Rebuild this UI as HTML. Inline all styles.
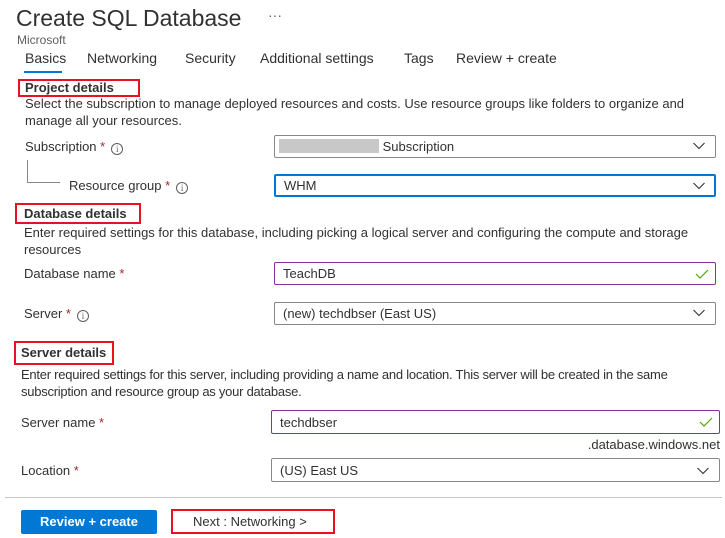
<!DOCTYPE html>
<html><head><meta charset="utf-8"><style>
*{margin:0;padding:0;box-sizing:border-box}
body{width:725px;height:538px;background:#fff;font-family:"Liberation Sans",sans-serif;color:#323130;position:relative;overflow:hidden}
.a{position:absolute;white-space:nowrap}
.t{font-size:13px;line-height:16px}
.red{border:2px solid #e81123}
.box{position:absolute;border:1px solid #8a8886;border-radius:2px;background:#fff;font-size:13px;line-height:22px;padding-left:8px}
.pur{border-color:#8a2da5}
.blue{border:2px solid #0078d4}
.st{color:#a4262c}
.info{display:inline-block;width:12px;height:12px;border:1px solid #605e5c;border-radius:50%;font-size:9px;line-height:10px;text-align:center;color:#605e5c;vertical-align:-1px;margin-left:6px;font-family:"Liberation Serif",serif}
.chev{position:absolute;right:10px;top:6px}
.chk{position:absolute;right:6px;top:5px}
</style></head><body>
<div class="a" style="left:16px;top:4px;font-size:23px;line-height:28px;color:#323130">Create SQL Database</div>
<div class="a" style="left:268px;top:7px;font-size:14px;color:#605e5c">···</div>
<div class="a" style="left:17px;top:33px;font-size:12px;color:#605e5c">Microsoft</div>
<div class="a" style="left:25px;top:50px;font-size:14px">Basics</div>
<div class="a" style="left:87px;top:50px;font-size:14px">Networking</div>
<div class="a" style="left:185px;top:50px;font-size:14px">Security</div>
<div class="a" style="left:260px;top:50px;font-size:14px">Additional settings</div>
<div class="a" style="left:404px;top:50px;font-size:14px">Tags</div>
<div class="a" style="left:456px;top:50px;font-size:14px">Review + create</div>
<div class="a" style="left:24px;top:71px;width:38px;height:2px;background:#0078d4"></div>

<div class="a red" style="left:18px;top:79px;width:122px;height:18px"></div>
<div class="a t" style="left:25px;top:80px;font-weight:bold;font-size:13px">Project details</div>
<div class="a t" style="left:25px;top:96px">Select the subscription to manage deployed resources and costs. Use resource groups like folders to organize and</div>
<div class="a t" style="left:25px;top:113px">manage all your resources.</div>

<div class="a t" style="left:25px;top:139px">Subscription <span class="st">*</span><span class="info">i</span></div>
<div class="box" style="left:274px;top:135px;width:442px;height:23px"><span style="display:inline-block;width:100px;height:14px;background:#c8c8c8;vertical-align:-2px;margin-left:-4px"></span> Subscription
<svg class="chev" width="12" height="8" viewBox="0 0 12 8"><path d="M0.5 1 L6 6.5 L11.5 1" fill="none" stroke="#323130" stroke-width="1.1"/></svg></div>
<div class="a" style="left:27px;top:160px;width:1px;height:22px;background:#8a8886"></div>
<div class="a" style="left:27px;top:182px;width:33px;height:1px;background:#8a8886"></div>
<div class="a t" style="left:69px;top:178px">Resource group <span class="st">*</span><span class="info">i</span></div>
<div class="box blue" style="left:274px;top:174px;width:442px;height:23px;line-height:20px">WHM
<svg class="chev" width="12" height="8" viewBox="0 0 12 8" style="top:6px;right:9px"><path d="M0.5 1 L6 6.5 L11.5 1" fill="none" stroke="#323130" stroke-width="1.1"/></svg></div>

<div class="a red" style="left:15px;top:203px;width:126px;height:21px"></div>
<div class="a t" style="left:24px;top:206px;font-weight:bold">Database details</div>
<div class="a t" style="left:24px;top:225px">Enter required settings for this database, including picking a logical server and configuring the compute and storage</div>
<div class="a t" style="left:24px;top:242px">resources</div>
<div class="a t" style="left:24px;top:266px">Database name <span class="st">*</span></div>
<div class="box pur" style="left:274px;top:262px;width:442px;height:23px">TeachDB
<svg class="chk" width="14" height="12" viewBox="0 0 14 12"><path d="M1 6 L5 10 L13 2" fill="none" stroke="#57a300" stroke-width="1.2"/></svg></div>
<div class="a t" style="left:24px;top:306px">Server <span class="st">*</span><span class="info">i</span></div>
<div class="box" style="left:274px;top:302px;width:442px;height:23px">(new) techdbser (East US)
<svg class="chev" width="12" height="8" viewBox="0 0 12 8"><path d="M0.5 1 L6 6.5 L11.5 1" fill="none" stroke="#323130" stroke-width="1.1"/></svg></div>

<div class="a red" style="left:14px;top:341px;width:100px;height:24px"></div>
<div class="a t" style="left:21px;top:345px;font-weight:bold">Server details</div>
<div class="a t" style="left:21px;top:367px;letter-spacing:-0.25px">Enter required settings for this server, including providing a name and location. This server will be created in the same</div>
<div class="a t" style="left:21px;top:384px;letter-spacing:-0.25px">subscription and resource group as your database.</div>
<div class="a t" style="left:21px;top:415px">Server name <span class="st">*</span></div>
<div class="box pur" style="left:271px;top:410px;width:449px;height:24px;line-height:23px">techdbser
<svg class="chk" width="14" height="12" viewBox="0 0 14 12"><path d="M1 6 L5 10 L13 2" fill="none" stroke="#57a300" stroke-width="1.2"/></svg></div>
<div class="a t" style="right:5px;top:437px">.database.windows.net</div>
<div class="a t" style="left:21px;top:463px">Location <span class="st">*</span></div>
<div class="box" style="left:271px;top:458px;width:449px;height:24px;line-height:23px">(US) East US
<svg class="chev" width="12" height="8" viewBox="0 0 12 8" style="top:8px"><path d="M0.5 1 L6 6.5 L11.5 1" fill="none" stroke="#323130" stroke-width="1.1"/></svg></div>

<div class="a" style="left:5px;top:497px;width:717px;height:1px;background:#c8c6c4"></div>
<div class="a" style="left:21px;top:510px;width:136px;height:24px;background:#0078d4;border-radius:2px;color:#fff;font-size:13px;font-weight:bold;line-height:24px;text-align:center">Review + create</div>
<div class="a red" style="left:171px;top:509px;width:164px;height:25px"></div>
<div class="a t" style="left:193px;top:514px">Next : Networking &gt;</div>
</body></html>
